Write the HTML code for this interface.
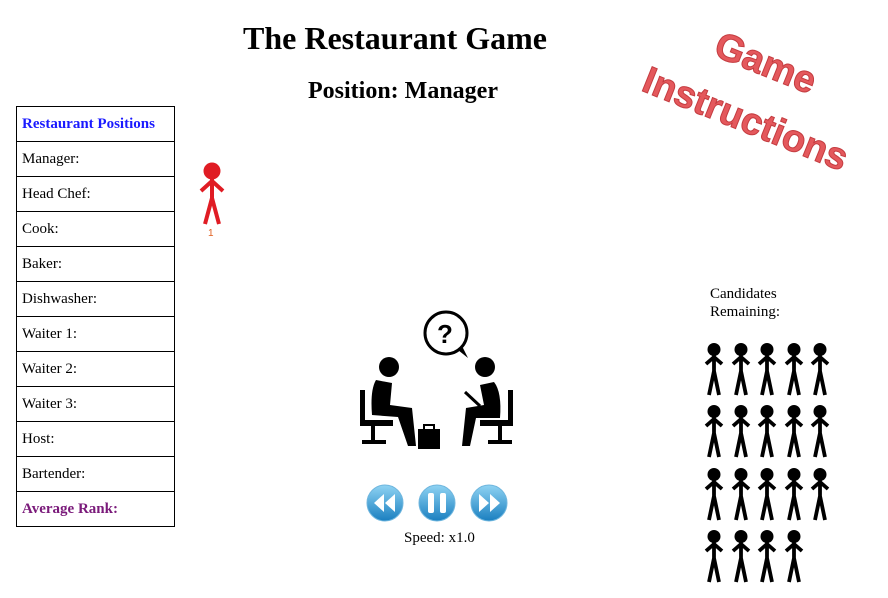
<!DOCTYPE html>
<html><head><meta charset="utf-8"><style>
body{margin:0;width:888px;height:598px;background:#fff;font-family:"Liberation Serif",serif;position:relative;overflow:hidden}
h1{position:absolute;left:0;width:790px;top:20px;margin:0;text-align:center;font-size:32px;font-weight:bold}
h2{position:absolute;left:0;width:806px;top:78px;margin:0;text-align:center;font-size:24px;font-weight:bold}
table{position:absolute;left:16px;top:106px;border-collapse:collapse;width:159px}
td{border:1px solid #000;height:35px;padding:1px 0 0 5px;font-size:15px;box-sizing:border-box}
.a{position:absolute}
</style></head><body>
<h1>The Restaurant Game</h1>
<h2>Position: Manager</h2>
<table>
<tr><td style="color:#1a1aff;font-weight:bold">Restaurant Positions</td></tr>
<tr><td>Manager:</td></tr><tr><td>Head Chef:</td></tr><tr><td>Cook:</td></tr><tr><td>Baker:</td></tr><tr><td>Dishwasher:</td></tr><tr><td>Waiter 1:</td></tr><tr><td>Waiter 2:</td></tr><tr><td>Waiter 3:</td></tr><tr><td>Host:</td></tr><tr><td>Bartender:</td></tr>
<tr><td style="color:#7a1a7a;font-weight:bold">Average Rank:</td></tr>
</table>
<svg class="a" style="left:0;top:0" width="888" height="598">
<defs>
<g id="s"><circle cx="10" cy="6.5" r="6.5"/><path d="M10 10V30M10 14L2 21M10 14L18 21M10 28L5 52M10 28L15 52" stroke="#000" stroke-width="3.8" fill="none"/></g>
<linearGradient id="b" x1="0" y1="0" x2="0" y2="1"><stop offset="0" stop-color="#8fd3f3"/><stop offset="1" stop-color="#1a7fc0"/></linearGradient>
</defs>
<g fill="#e01c24"><circle cx="212" cy="171" r="8.5"/><path d="M212 178V200M212 181L201 191M212 181L223 191M212 198L205 224M212 198L219 224" stroke="#e01c24" stroke-width="4" fill="none"/></g>
<text x="208" y="236" font-family="Liberation Sans" font-size="10" fill="#e06020">1</text>
<g fill="#000">
<use href="#s" x="704" y="343"/><use href="#s" x="731" y="343"/><use href="#s" x="757" y="343"/><use href="#s" x="784" y="343"/><use href="#s" x="810" y="343"/>
<use href="#s" x="704" y="405"/><use href="#s" x="731" y="405"/><use href="#s" x="757" y="405"/><use href="#s" x="784" y="405"/><use href="#s" x="810" y="405"/>
<use href="#s" x="704" y="468"/><use href="#s" x="731" y="468"/><use href="#s" x="757" y="468"/><use href="#s" x="784" y="468"/><use href="#s" x="810" y="468"/>
<use href="#s" x="704" y="530"/><use href="#s" x="731" y="530"/><use href="#s" x="757" y="530"/><use href="#s" x="784" y="530"/>
</g>
<g fill="#000">
<circle cx="446" cy="333" r="21" fill="none" stroke="#000" stroke-width="3"/><path d="M458 350L468 358L462 346Z"/>
<text x="437" y="343" font-family="Liberation Sans" font-weight="bold" font-size="26">?</text>
<circle cx="389" cy="367" r="10"/><circle cx="485" cy="367" r="10"/>
<path d="M376 380Q370 390 372 415L398 417L408 446L416 446L412 408L390 405L392 383Z"/>
<path d="M360 390h5v30h28v6h-33z"/><path d="M373 426v14M362 442h24" stroke="#000" stroke-width="4"/>
<path d="M494 382Q502 392 500 418L476 418L470 446L462 446L466 408L484 405L480 385Z"/>
<path d="M465 392l15 14" stroke="#000" stroke-width="3"/>
<path d="M513 390h-5v30h-28v6h33z"/><path d="M500 426v14M488 442h24" stroke="#000" stroke-width="4"/>
<rect x="418" y="429" width="22" height="20"/><rect x="424" y="425" width="10" height="5" fill="none" stroke="#000" stroke-width="2"/>
</g>
<g>
<circle cx="385" cy="503" r="18" fill="url(#b)" stroke="#6fb6de"/><path d="M384 494l-10 9 10 9zM395 494l-10 9 10 9z" fill="#fff"/>
<circle cx="437" cy="503" r="18" fill="url(#b)" stroke="#6fb6de"/><rect x="428" y="493" width="6" height="20" rx="2" fill="#fff"/><rect x="440" y="493" width="6" height="20" rx="2" fill="#fff"/>
<circle cx="489" cy="503" r="18" fill="url(#b)" stroke="#6fb6de"/><path d="M479 494l10 9-10 9zM490 494l10 9-10 9z" fill="#fff"/>
</g>
<g font-family="Liberation Sans" font-weight="bold" fill="#e4585c" stroke="#c43c40" stroke-width="1">
<text x="712" y="55" font-size="38" transform="rotate(22 712 55)">Game</text>
<text x="640" y="90" font-size="38" transform="rotate(22 640 90)">Instructions</text>
</g>
</svg>
<div class="a" style="left:404px;top:530px;font-size:15px">Speed: x1.0</div>
<div class="a" style="left:710px;top:285px;font-size:15px;line-height:18px">Candidates<br>Remaining:</div>
</body></html>
